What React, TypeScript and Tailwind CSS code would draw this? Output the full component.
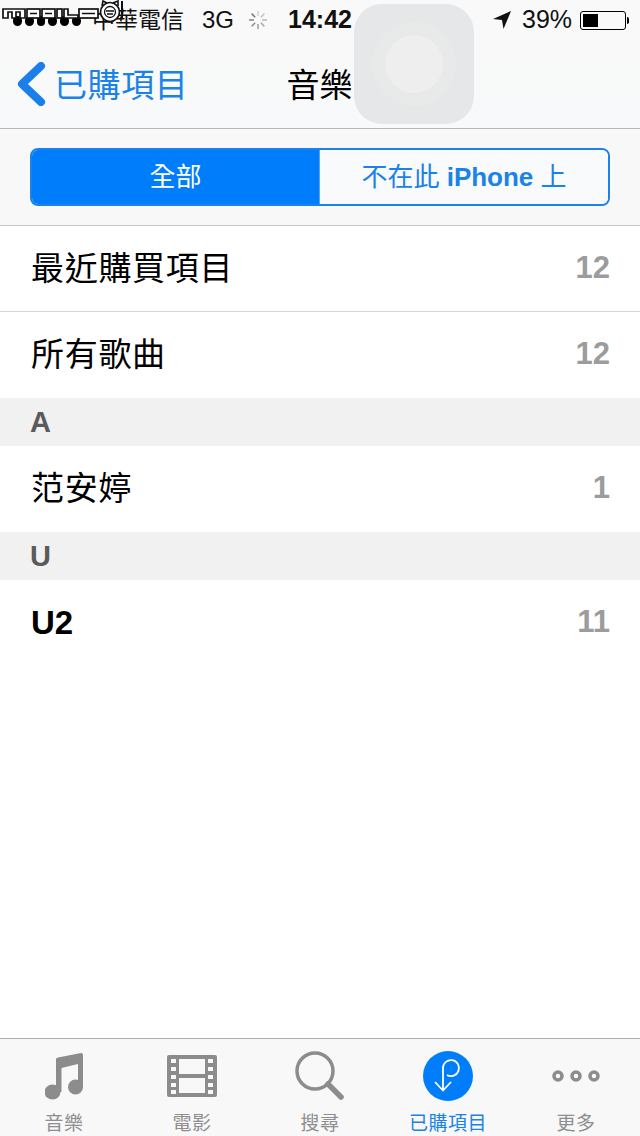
import type { JSX } from 'react';

const CJK = "font-['Liberation_Sans','Noto_Sans_CJK_TC',sans-serif]";

function Spinner() {
  const angles = [0, 45, 90, 135, 180, 225, 270, 315];
  return (
    <svg width="20" height="20" viewBox="0 0 20 20">
      {angles.map((a, i) => (
        <line
          key={a}
          x1="10"
          y1="1"
          x2="10"
          y2="6"
          stroke="#777"
          strokeWidth="1.5"
          opacity={0.3 + i * 0.1}
          transform={`rotate(${a} 10 10)`}
        />
      ))}
    </svg>
  );
}

function StatusBar() {
  return (
    <div className="h-10 flex items-center text-[23px] text-[#111] pl-[13px] whitespace-nowrap">
      <div className="flex gap-[3px] w-[68px] mt-px">
        {[0, 1, 2, 3, 4, 5].map((i) => (
          <span key={i} className="w-[10px] h-[10px] rounded-full bg-black" />
        ))}
      </div>
      <span className="ml-[11px] w-[92px]">中華電信</span>
      <span className="ml-[18px] w-[30px] text-[24px]">3G</span>
      <span className="ml-4 w-5 flex">
        <Spinner />
      </span>
      <span className="ml-5 w-[66px] font-bold text-[25px]">14:42</span>
      <svg className="ml-[138px]" width="20" height="20" viewBox="0 0 20 20">
        <path d="M19 1 L1 9 L10 10 L11.5 19 Z" fill="#111" />
      </svg>
      <span className="ml-[10px] w-[50px] text-[25px]">39%</span>
      <div className="ml-2 w-[46px] h-[19px] border border-black rounded-[3px] p-[2px] flex">
        <div className="w-[15px] bg-black" />
      </div>
      <div className="ml-px w-[2px] h-[7px] bg-black rounded-r-sm" />
    </div>
  );
}

function NavBar() {
  return (
    <div className="h-[88px] flex items-center">
      <svg className="ml-4" width="30" height="44" viewBox="0 0 30 44">
        <path
          d="M25 4 L6 22 L25 40"
          fill="none"
          stroke="#1a7fe8"
          strokeWidth="8"
          strokeLinecap="round"
          strokeLinejoin="round"
        />
      </svg>
      <span className="ml-2 pt-1 text-[33px] tracking-[0.6px] text-[#1a82e8]">已購項目</span>
      <span className="ml-[98px] pt-1 text-[33px] text-black">音樂</span>
    </div>
  );
}

function Segments() {
  return (
    <div className="h-[97px] bg-[#f8f8f8] px-[30px] pt-[19px] border-b border-[#c4c4c6]">
      <div className="h-[58px] flex border-2 border-[#1a82e8] rounded-lg overflow-hidden text-[26px]">
        <div className="w-[287px] bg-[#007dfb] text-white flex items-center justify-center">全部</div>
        <div className="flex-1 border-l border-[#5aa5ee] bg-[#f9fafb] text-[#1a82e8] flex items-center justify-center">
          <span>
            不在此 <span className="font-bold">iPhone</span> 上
          </span>
        </div>
      </div>
    </div>
  );
}

function Row({ label, count, bold, border }: { label: string; count: string; bold?: boolean; border?: boolean }) {
  return (
    <div className={`h-[86px] bg-white flex items-center justify-between pl-[31px] pr-[30px] ${border ? 'border-b border-[#d4d4d6]' : ''}`}>
      <span className={`text-[33px] text-black ${bold ? 'font-bold' : 'tracking-[0.7px]'}`}>{label}</span>
      <span className="text-[31px] leading-[36px] pb-[2px] font-bold text-[#9c9c9c]">{count}</span>
    </div>
  );
}

function SectionHeader({ letter }: { letter: string }) {
  return (
    <div className="h-12 bg-[#f1f1f2] pl-[30px] pt-0.5 flex items-center text-[29px] font-bold text-[#5a5a5a]">
      {letter}
    </div>
  );
}

function TabItem({ label, icon, active }: { label: string; icon: JSX.Element; active?: boolean }) {
  return (
    <div className="flex-1 flex flex-col items-center">
      <div className="h-[62px] flex items-center justify-center">{icon}</div>
      <span className={`text-[19px] leading-6 mt-[5px] tracking-[0.5px] ${active ? 'text-[#1a82e8]' : 'text-[#8e8e90]'}`}>
        {label}
      </span>
    </div>
  );
}

function TabBar() {
  const gray = '#8c8c8c';
  return (
    <div className="h-[98px] bg-[#f8f8f8] border-t border-[#adadaf] flex pt-[6px] overflow-hidden">
      <TabItem
        label="音樂"
        icon={
          <svg width="38" height="47" viewBox="0 0 38 47">
            <path d="M11 6 Q11 5 13 4.5 L36 0 Q38 0 38 2 V34 H33 V11 L16.5 15 V39 H11 Z" fill={gray} />
            <ellipse cx="7.5" cy="39" rx="8" ry="7.5" fill={gray} />
            <ellipse cx="30.5" cy="34" rx="7.5" ry="7.5" fill={gray} />
          </svg>
        }
      />
      <TabItem
        label="電影"
        icon={
          <svg width="50" height="42" viewBox="0 0 50 42">
            <rect width="50" height="42" rx="2" fill={gray} />
            <rect x="12" y="4" width="26" height="15" fill="#f8f8f8" />
            <rect x="12" y="23" width="26" height="15" fill="#f8f8f8" />
            {[4, 12, 20, 28, 35].map((y) => (
              <g key={y}>
                <rect x="4" y={y} width="5" height="4" fill="#f8f8f8" />
                <rect x="41" y={y} width="5" height="4" fill="#f8f8f8" />
              </g>
            ))}
          </svg>
        }
      />
      <TabItem
        label="搜尋"
        icon={
          <svg width="50" height="50" viewBox="0 0 50 50">
            <circle cx="20" cy="20" r="18" fill="none" stroke={gray} strokeWidth="3.5" />
            <line x1="33" y1="33" x2="46" y2="46" stroke={gray} strokeWidth="5.5" strokeLinecap="round" />
          </svg>
        }
      />
      <TabItem
        active
        label="已購項目"
        icon={
          <div className="w-[50px] h-[50px] rounded-full bg-[#007dfb] flex items-center justify-center">
            <svg width="50" height="50" viewBox="0 0 50 50">
              <path
                d="M20 39 V17 A8 8 0 1 1 24 24 M12 31 L20 39.5 L28 31"
                fill="none"
                stroke="white"
                strokeWidth="1.8"
              />
            </svg>
          </div>
        }
      />
      <TabItem
        label="更多"
        icon={
          <svg width="48" height="12" viewBox="0 0 48 12">
            {[6, 24, 42].map((cx) => (
              <circle key={cx} cx={cx} cy="6" r="4" fill="none" stroke={gray} strokeWidth="3.5" />
            ))}
          </svg>
        }
      />
    </div>
  );
}

export default function App() {
  return (
    <div className={`relative w-[640px] h-[1136px] overflow-hidden bg-white flex flex-col ${CJK}`}>
      <div className="bg-gradient-to-b from-[#f9f9f9] to-[#f8f9fa]">
        <StatusBar />
        <NavBar />
      </div>
      <div className="h-px bg-[#b5b5b7]" />
      <Segments />
      <Row label="最近購買項目" count="12" border />
      <Row label="所有歌曲" count="12" />
      <SectionHeader letter="A" />
      <Row label="范安婷" count="1" />
      <SectionHeader letter="U" />
      <Row label="U2" count="11" bold />
      <div className="flex-1" />
      <TabBar />

      {/* assistive touch button over the nav bar */}
      <div className="absolute left-[354px] top-1 w-[120px] h-[120px] rounded-[28px] bg-[#e6e7e8] flex items-center justify-center">
        <div className="w-[84px] h-[84px] rounded-full bg-[#e8e9e9] flex items-center justify-center">
          <div className="w-[58px] h-[58px] rounded-full bg-[#eeeeee]" />
        </div>
      </div>

      {/* site watermark over the status bar */}
      <svg className="absolute left-0.5 top-0" width="124" height="26" viewBox="0 0 124 26">
        <g fill="#fff" stroke="#111" strokeWidth="1.7">
          <path d="M1 9 H23 V18 H18 V12 H14 V18 H10 V12 H6 V18 H1 Z" />
          <rect x="25" y="9" width="13" height="9" />
          <rect x="40" y="9" width="13" height="9" />
          <rect x="55" y="9" width="5" height="9" />
          <path d="M62 9 H66 V15 H76 V18 H62 Z" />
          <rect x="77" y="9" width="19" height="9" />
        </g>
        <path d="M28 13.5 H35 M43 13.5 H50 M80 13.5 H93" stroke="#111" strokeWidth="1.4" />
        <path d="M100 6 L101 1 L105 3 M111 3 L116 1 L116 6" fill="#fff" stroke="#111" strokeWidth="1.6" />
        <circle cx="108" cy="12" r="9.5" fill="#fff" stroke="#111" strokeWidth="1.7" />
        <circle cx="108" cy="12" r="5.5" fill="none" stroke="#111" strokeWidth="1.3" />
        <path d="M104 11 L112 11 M105 14 L111 14" stroke="#111" strokeWidth="1.3" />
        <path d="M120 1 V18" stroke="#111" strokeWidth="2" />
      </svg>
    </div>
  );
}
